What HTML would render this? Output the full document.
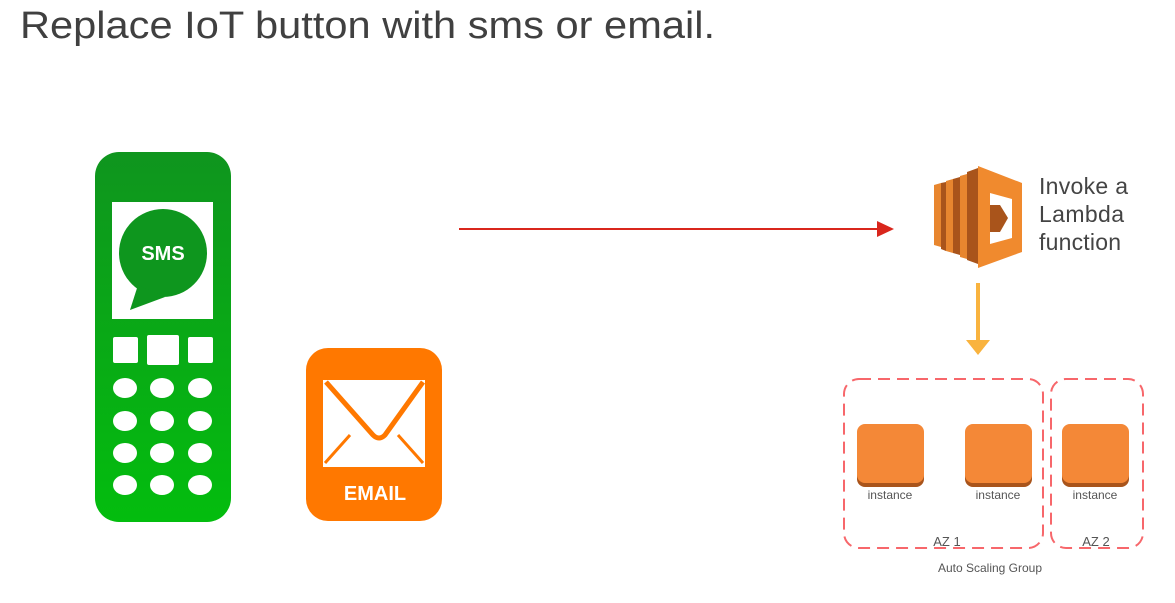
<!DOCTYPE html>
<html><head><meta charset="utf-8"><style>
html,body{margin:0;padding:0;background:#fff;width:1175px;height:603px;overflow:hidden}
svg{display:block}
</style></head><body>
<svg width="1175" height="603" viewBox="0 0 1175 603" xmlns="http://www.w3.org/2000/svg">
<defs>
<linearGradient id="g" x1="0" y1="0" x2="0" y2="1"><stop offset="0" stop-color="#0f951e"/><stop offset="1" stop-color="#03bd0e"/></linearGradient>
</defs>
<text x="20" y="38" font-family="Liberation Sans, sans-serif" font-size="38" fill="#404040" textLength="695" lengthAdjust="spacingAndGlyphs">Replace IoT button with sms or email.</text>

<!-- phone -->
<rect x="95" y="152" width="136" height="370" rx="24" fill="url(#g)"/>
<rect x="112" y="202" width="101" height="117" fill="#fff"/>
<circle cx="163" cy="253" r="44" fill="#0e961e"/>
<path d="M138 285 L130 310 L165 297 Z" fill="#0e961e"/>
<text x="163" y="260" text-anchor="middle" font-family="Liberation Sans, sans-serif" font-weight="bold" font-size="20" fill="#fff">SMS</text>
<rect x="113" y="337" width="25" height="26" rx="2" fill="#fff"/>
<rect x="147" y="335" width="32" height="30" rx="2" fill="#fff"/>
<rect x="188" y="337" width="25" height="26" rx="2" fill="#fff"/>
<g fill="#fff">
<ellipse cx="125" cy="388" rx="12" ry="10"/><ellipse cx="162" cy="388" rx="12" ry="10"/><ellipse cx="200" cy="388" rx="12" ry="10"/>
<ellipse cx="125" cy="421" rx="12" ry="10"/><ellipse cx="162" cy="421" rx="12" ry="10"/><ellipse cx="200" cy="421" rx="12" ry="10"/>
<ellipse cx="125" cy="453" rx="12" ry="10"/><ellipse cx="162" cy="453" rx="12" ry="10"/><ellipse cx="200" cy="453" rx="12" ry="10"/>
<ellipse cx="125" cy="485" rx="12" ry="10"/><ellipse cx="162" cy="485" rx="12" ry="10"/><ellipse cx="200" cy="485" rx="12" ry="10"/>
</g>

<!-- email -->
<rect x="306" y="348" width="136" height="173" rx="22" fill="#ff7800"/>
<rect x="323" y="380" width="102" height="87" fill="#fff"/>
<path d="M326 382 L373 435 Q379 441 385 435 L423 382" fill="none" stroke="#ff7800" stroke-width="5"/>
<path d="M325 463 L350 435 M423 463 L398 435" stroke="#ff7800" stroke-width="3"/>
<text x="375" y="500" text-anchor="middle" font-family="Liberation Sans, sans-serif" font-weight="bold" font-size="20" fill="#fff">EMAIL</text>

<!-- red arrow -->
<line x1="459" y1="229" x2="880" y2="229" stroke="#d9261c" stroke-width="2"/>
<path d="M877 221 L894 229 L877 237 Z" fill="#d9261c"/>

<!-- lambda -->
<path d="M934 185 L941 183 L941 247 L934 245 Z" fill="#e8862f"/>
<path d="M946 181 L953 179 L953 253 L946 251 Z" fill="#e8862f"/>
<path d="M941 183 L946 182 L946 251 L941 249 Z" fill="#a9541b"/>
<path d="M953 179 L960 177 L960 255 L953 253 Z" fill="#a9541b"/>
<path d="M960 176 L967 174 L967 259 L960 257 Z" fill="#e8862f"/>
<path d="M967 172 L978 168 L978 264 L967 260 Z" fill="#a9541b"/>
<path d="M978 166 L1022 183 L1022 252 L978 268 Z" fill="#f08a2e"/>
<path d="M990 193 L1012 199 L1012 238 L990 244 Z" fill="#fff"/>
<path d="M990 205 L1000 205 L1008 218 L1000 232 L990 232 Z" fill="#a9541b"/>
<text font-family="Liberation Sans, sans-serif" font-size="23" fill="#444" lengthAdjust="spacingAndGlyphs"><tspan x="1039" y="194" textLength="89">Invoke a</tspan><tspan x="1039" y="222" textLength="85">Lambda</tspan><tspan x="1039" y="250" textLength="82">function</tspan></text>

<!-- orange arrow -->
<line x1="978" y1="283" x2="978" y2="343" stroke="#f9b33e" stroke-width="4"/>
<path d="M966 340 L990 340 L978 355 Z" fill="#f9b33e"/>

<!-- AZ boxes -->
<rect x="844" y="379" width="199" height="169" rx="15" fill="none" stroke="#f7676b" stroke-width="2" stroke-dasharray="12 7"/>
<rect x="1051" y="379" width="92" height="169" rx="15" fill="none" stroke="#f7676b" stroke-width="2" stroke-dasharray="12 7"/>
<g fill="#a9541b"><rect x="857" y="428" width="67" height="59" rx="8"/><rect x="965" y="428" width="67" height="59" rx="8"/><rect x="1062" y="428" width="67" height="59" rx="8"/></g>
<g fill="#f48837"><rect x="857" y="424" width="67" height="59" rx="8"/><rect x="965" y="424" width="67" height="59" rx="8"/><rect x="1062" y="424" width="67" height="59" rx="8"/></g>
<g font-family="Liberation Sans, sans-serif" font-size="12" fill="#555" text-anchor="middle">
<text x="890" y="499">instance</text><text x="998" y="499">instance</text><text x="1095" y="499">instance</text>
<text x="947" y="546" font-size="13">AZ 1</text><text x="1096" y="546" font-size="13">AZ 2</text>
<text x="990" y="572">Auto Scaling Group</text>
</g>
</svg>
</body></html>
